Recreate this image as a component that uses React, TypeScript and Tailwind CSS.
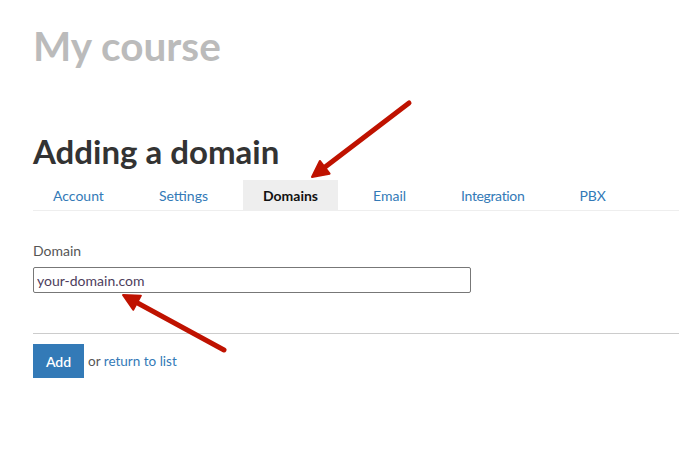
import { useState } from 'react';

const tabs = ['Account', 'Settings', 'Domains', 'Email', 'Integration', 'PBX'];

function Arrow({ x1, y1, x2, y2 }: { x1: number; y1: number; x2: number; y2: number }) {
  // shaft from tail (x1,y1) to tip (x2,y2), head drawn as a filled triangle
  const dx = x2 - x1;
  const dy = y2 - y1;
  const len = Math.hypot(dx, dy);
  const ux = dx / len;
  const uy = dy / len;
  const head = 16;
  const half = 8;
  const bx = x2 - ux * head;
  const by = y2 - uy * head;
  const p1 = `${bx - uy * half},${by + ux * half}`;
  const p2 = `${bx + uy * half},${by - ux * half}`;
  return (
    <g>
      <line x1={x1} y1={y1} x2={bx + ux * 2} y2={by + uy * 2} stroke="#bf1200" strokeWidth={5} strokeLinecap="round" />
      <polygon points={`${x2},${y2} ${p1} ${p2}`} fill="#bf1200" stroke="#bf1200" strokeWidth={2} strokeLinejoin="round" />
    </g>
  );
}

export default function App() {
  const [domain, setDomain] = useState('your-domain.com');

  return (
    <div className="relative w-[679px] h-[450px] bg-white overflow-hidden font-['Lato',sans-serif]">
      <div className="pl-[33px] pt-[22px]">
        {/* Course title */}
        <h1 className="text-[40.5px] leading-[48px] font-bold text-[#bbbbbb]">My course</h1>

        {/* Page title */}
        <h2 className="mt-[62px] text-[33px] leading-[38px] font-bold text-[#333333]">Adding a domain</h2>

        {/* Tabs */}
        <nav className="mt-[10px] flex gap-[15px] border-b border-[#eeeeee] h-[31px]">
          {tabs.map((tab) => (
            <div
              key={tab}
              className={`h-[30px] px-5 flex items-center text-[14px] ${
                tab === 'Domains' ? 'bg-[#eeeeee] font-bold text-[#111111]' : 'text-[#337ab7]'
              } ${tab === 'Integration' ? 'tracking-[-0.35px]' : ''}`}
            >
              {tab}
            </div>
          ))}
        </nav>

        {/* Form */}
        <div className="mt-[32px]">
          <label className="block text-[14px] leading-[16px] text-[#555555]">Domain</label>
          <input
            value={domain}
            onChange={(e) => setDomain(e.target.value)}
            className="mt-[8px] w-[438px] h-[26px] border border-[#777777] rounded-[2px] px-[3px] text-[14px] text-[#4d3d5c] outline-none font-['Lato',sans-serif]"
          />
        </div>

        <div className="mt-[40px] border-t border-[#cccccc]" />

        <div className="mt-[10px] flex items-center gap-[4px] text-[13.5px]">
          <button className="w-[51px] h-[34px] bg-[#337ab7] text-white font-semibold text-[14px]">Add</button>
          <span className="text-[#555555]">
            or <a className="text-[#337ab7]">return to list</a>
          </span>
        </div>
      </div>

      {/* Annotation arrows */}
      <svg className="absolute inset-0 pointer-events-none" width="679" height="450">
        <Arrow x1={409} y1={103} x2={312} y2={177} />
        <Arrow x1={224} y1={350} x2={123} y2={295} />
      </svg>
    </div>
  );
}
